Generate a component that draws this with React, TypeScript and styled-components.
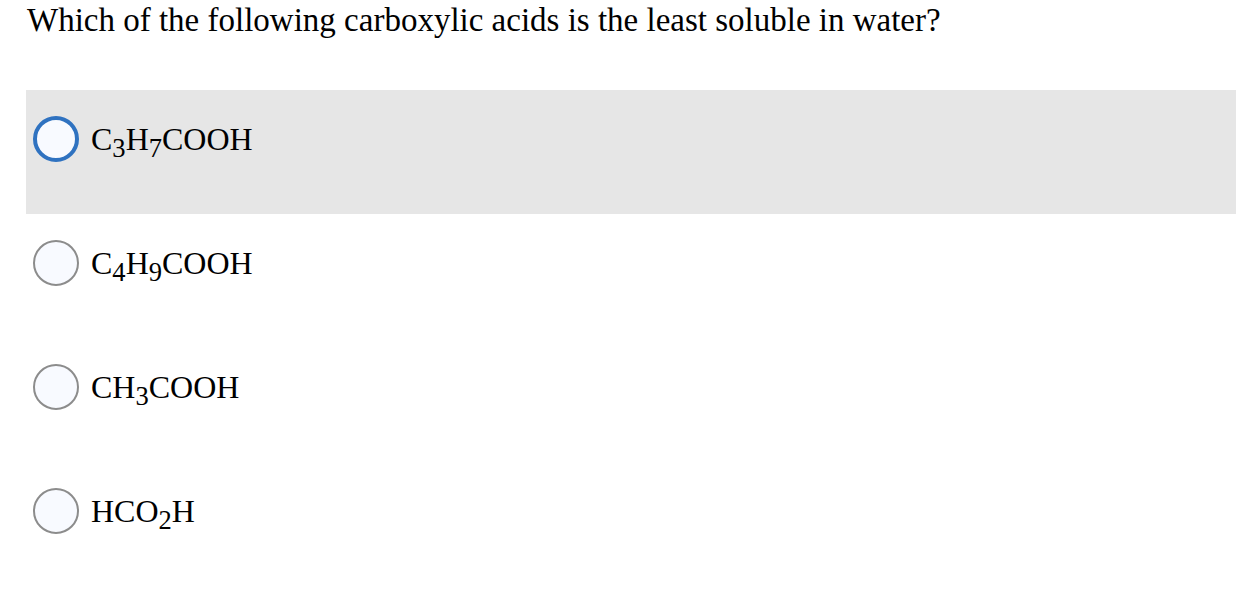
import React from "react";
import styled, { createGlobalStyle } from "styled-components";

const Global = createGlobalStyle`
  html, body { margin: 0; padding: 0; background: #ffffff; }
  body { font-family: "Liberation Serif", "Times New Roman", serif; color: #000; }
`;

const Page = styled.div`
  padding: 0 0 0 26px;
  width: 1210px;
`;

const Question = styled.div`
  font-size: 33px;
  line-height: 40px;
  height: 40px;
  margin: 0 0 50px 1px;
`;

const Options = styled.div`
  display: flex;
  flex-direction: column;
`;

const Row = styled.div<{ $active?: boolean }>`
  height: 124px;
  box-sizing: border-box;
  padding: 26px 0 0 7px;
  display: flex;
  align-items: flex-start;
  gap: 12px;
  background: ${(p) => (p.$active ? "#e6e6e6" : "transparent")};
`;

const Radio = styled.span<{ $active?: boolean }>`
  width: 46px;
  height: 46px;
  box-sizing: border-box;
  border-radius: 50%;
  background: #f8faff;
  border: ${(p) => (p.$active ? "4px solid #2f72c0" : "2px solid #8c8c8c")};
  flex: none;
`;

const Label = styled.span`
  font-size: 32px;
  line-height: 46px;
  white-space: nowrap;
  sub {
    font-size: 0.83em;
    vertical-align: -7px;
    line-height: 0;
  }
`;

const options = [
  { key: "a", node: <>C<sub>3</sub>H<sub>7</sub>COOH</>, active: true },
  { key: "b", node: <>C<sub>4</sub>H<sub>9</sub>COOH</> },
  { key: "c", node: <>CH<sub>3</sub>COOH</> },
  { key: "d", node: <>HCO<sub>2</sub>H</> },
];

export default function App() {
  return (
    <>
      <Global />
      <Page>
        <Question>Which of the following carboxylic acids is the least soluble in water?</Question>
        <Options>
          {options.map((o) => (
            <Row key={o.key} $active={o.active}>
              <Radio $active={o.active} />
              <Label>{o.node}</Label>
            </Row>
          ))}
        </Options>
      </Page>
    </>
  );
}
